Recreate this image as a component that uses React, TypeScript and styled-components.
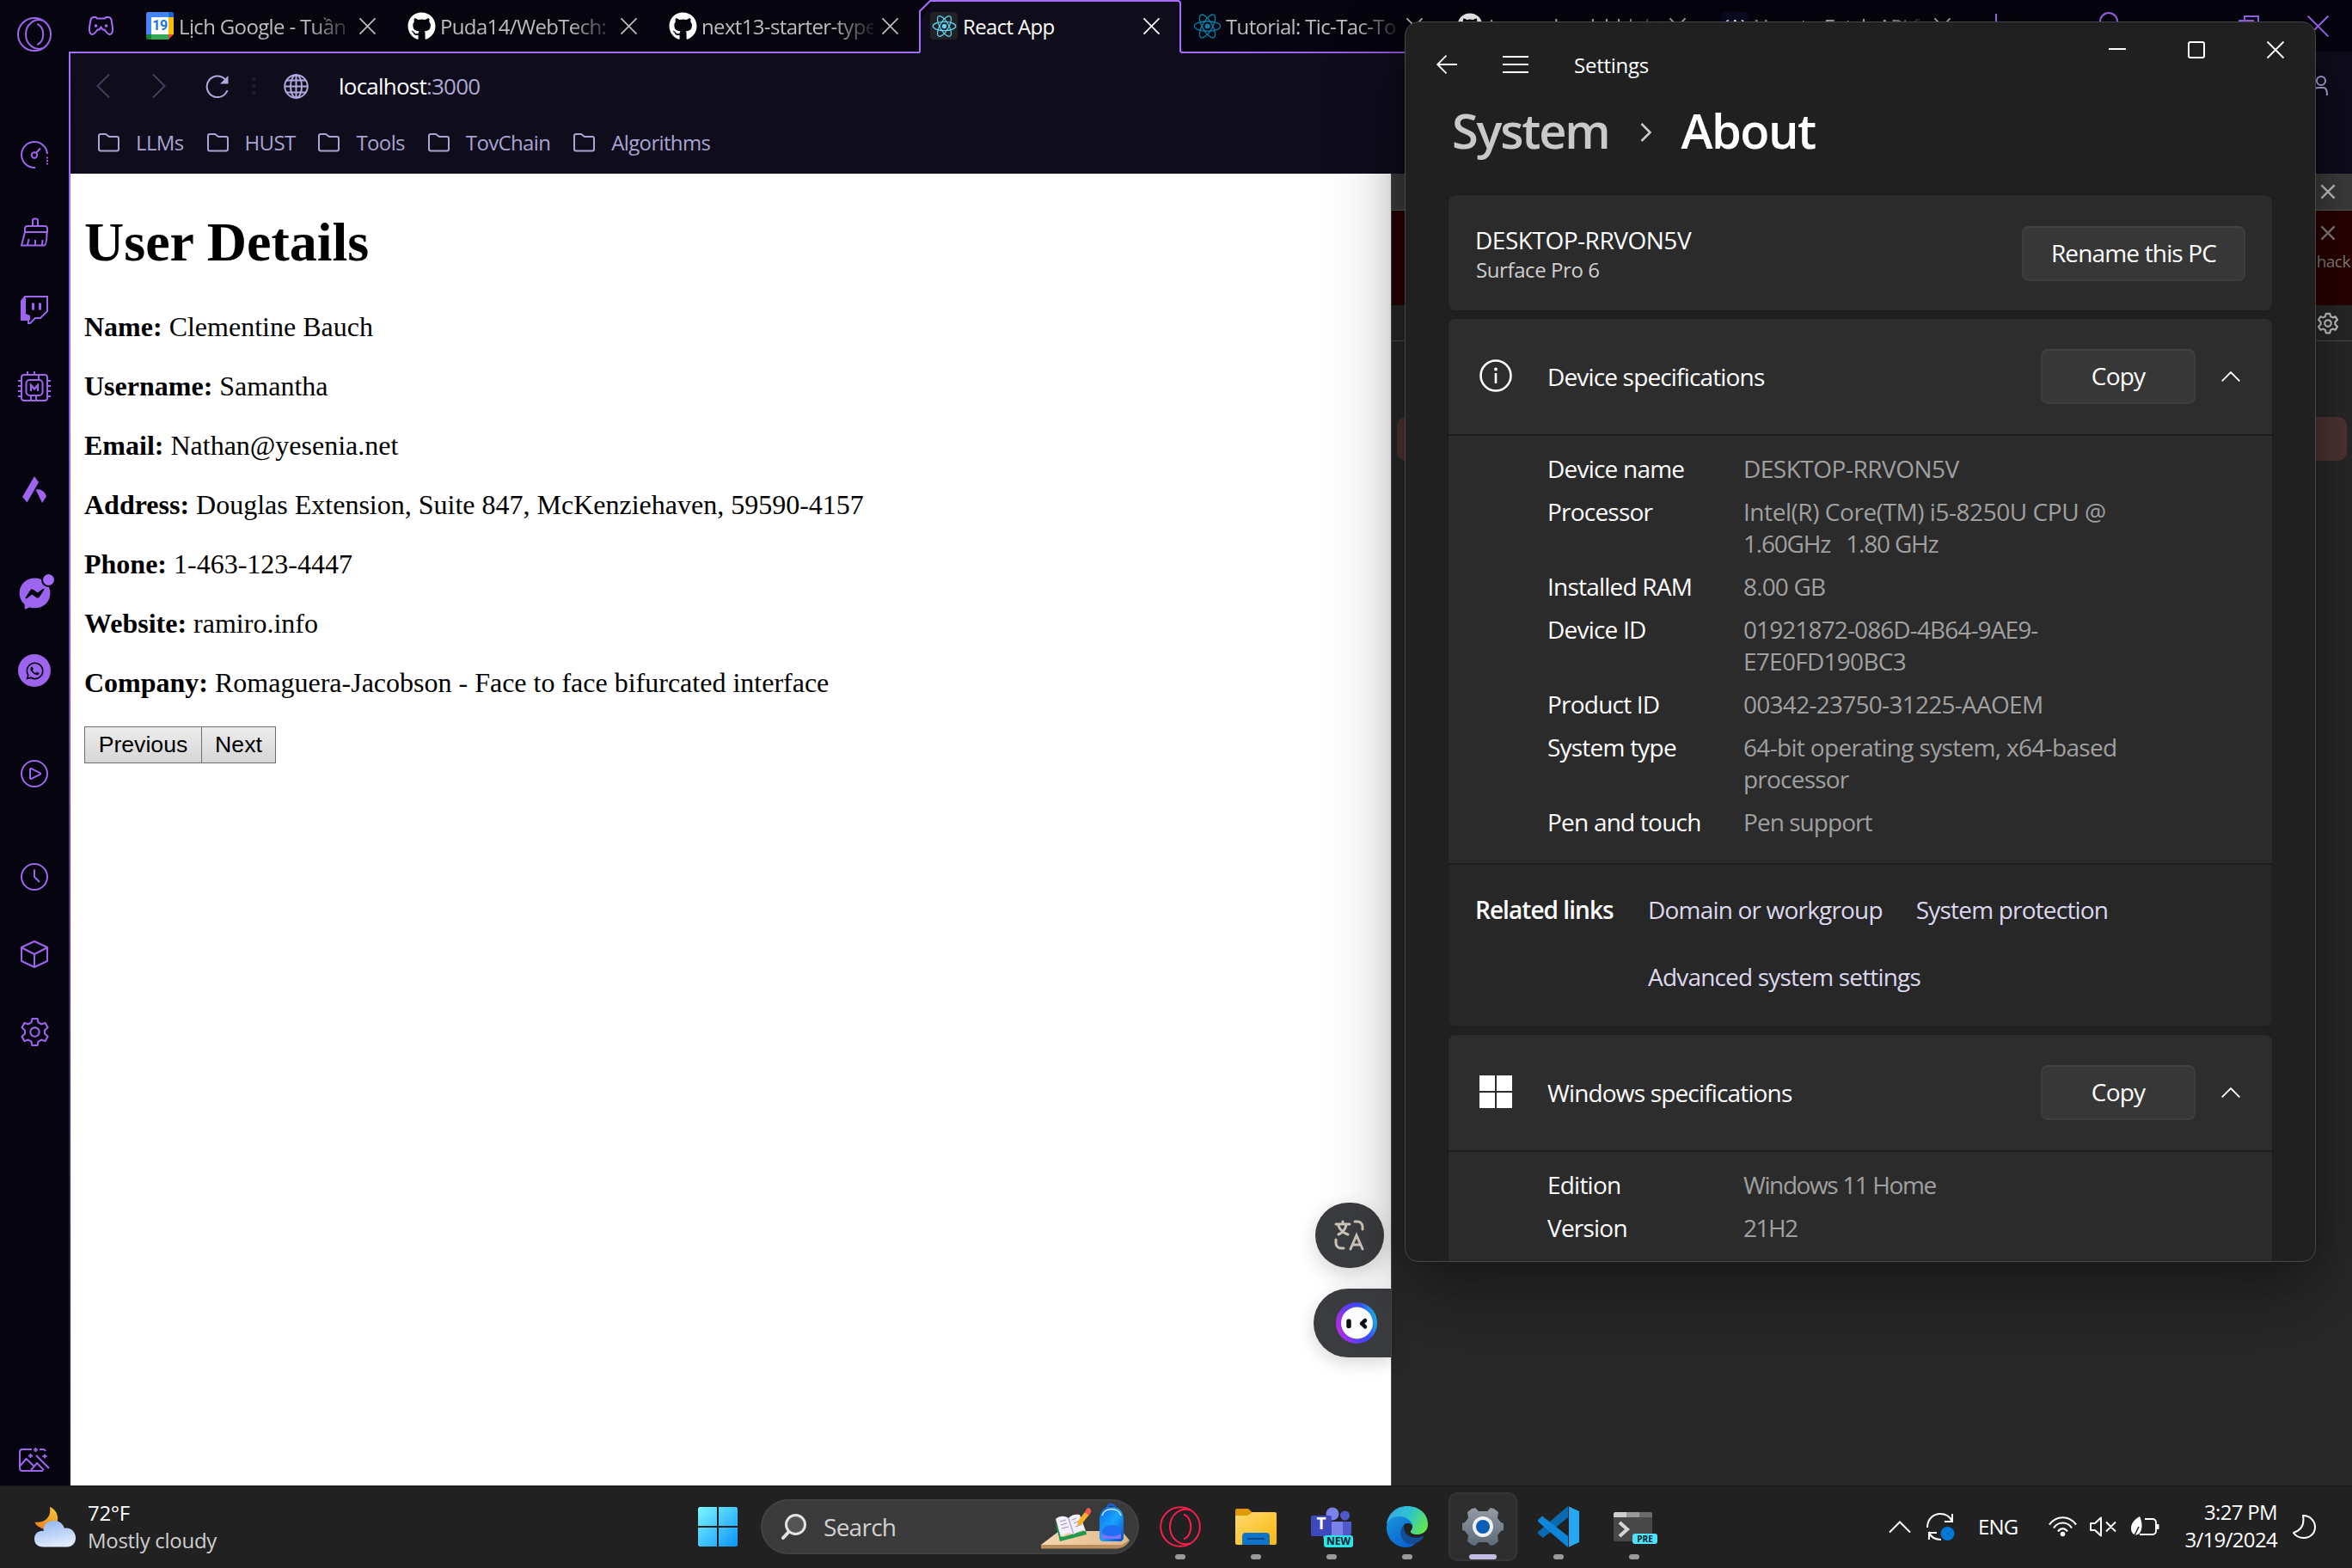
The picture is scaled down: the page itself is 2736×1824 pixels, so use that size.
import React from "react";
import styled, { createGlobalStyle } from "styled-components";
import { FaGithub, FaFacebookMessenger, FaWhatsapp } from "react-icons/fa";

const PURPLE = "#9d65ee";
const LILAC = "#b3a8de";
const UI = `"Open Sans", "Noto Sans", sans-serif`;

const GlobalStyle = createGlobalStyle`
  *, *::before, *::after { box-sizing: border-box; }
  body { margin: 0; background: #06040e; }
  svg { display: block; flex: none; overflow: visible; }
`;

const Desktop = styled.div`
  position: relative;
  display: flex;
  flex-direction: column;
  width: 2736px;
  height: 1824px;
  overflow: hidden;
  font-family: ${UI};
  font-size: 24px;
  letter-spacing: -0.02em;
`;

/* ---------- browser ---------- */

const Browser = styled.div`
  display: flex;
  height: 1728px;
  background: #06040e;
`;

const Sidebar = styled.div`
  display: flex;
  flex-direction: column;
  width: 80px;
`;

const SideGroup = styled.div<{ $top?: string }>`
  display: flex;
  flex-direction: column;
  margin-top: ${(p) => p.$top ?? "30px"};
`;

const SideSlot = styled.div<{ $h?: number }>`
  position: relative;
  display: flex;
  align-items: center;
  justify-content: center;
  height: ${(p) => p.$h ?? 90}px;
  color: ${PURPLE};
`;

const NoticeDot = styled.span`
  position: absolute;
  left: 50px;
  top: 23px;
  width: 13px;
  height: 13px;
  border-radius: 50%;
  background: #a66bff;
  box-shadow: 0 0 0 2px #06040e;
`;

const WhatsBadge = styled.div`
  display: flex;
  align-items: center;
  justify-content: center;
  width: 38px;
  height: 38px;
  border-radius: 50%;
  background: ${PURPLE};
  color: #06040e;
`;

const Main = styled.div`
  display: flex;
  flex-direction: column;
  flex: 1;
  min-width: 0;
`;

const TabStrip = styled.div`
  display: flex;
  height: 62px;
  padding: 0 0 2px 23px;
  align-items: center;
  background: linear-gradient(90deg, #a66bff 0%, #a66bff 50%, #0f0c1c 94%) 0 100% / 100% 2px no-repeat;
`;

const Tabs = styled.div`
  display: flex;
  height: 62px;
  margin: 0 0 -2px 26px;
`;

const Tab = styled.div<{ $active?: boolean; $gap?: number }>`
  position: relative;
  display: flex;
  align-items: center;
  width: 304px;
  height: 62px;
  margin-left: ${(p) => p.$gap ?? 0}px;
  padding: 0 25px 2px 12px;
  color: ${(p) => (p.$active ? "#fff" : "#bdbdbf")};
  background: ${(p) =>
    p.$active ? "linear-gradient(125deg, #06040e 14px, #0f0c1c 14px)" : "transparent"};
`;

const TabOutline = styled.svg`
  position: absolute;
  left: 0;
  top: 0;
`;

const TabIcon = styled.div<{ $bg?: string }>`
  position: relative;
  display: flex;
  align-items: center;
  justify-content: center;
  width: 32px;
  height: 32px;
  border-radius: 4px;
  background: ${(p) => p.$bg ?? "transparent"};
  font-size: 22px;
  line-height: 28px;
  color: #fff;
`;

const TabTitle = styled.div<{ $fade?: boolean }>`
  flex: 1;
  min-width: 0;
  margin: 2px 10px 0 6px;
  line-height: 34px;
  letter-spacing: -0.027em;
  white-space: nowrap;
  overflow: hidden;
  -webkit-mask-image: ${(p) =>
    p.$fade ? "linear-gradient(90deg, #000 76%, rgba(0,0,0,.12) 100%)" : "none"};
`;

const StripButton = styled.div<{ $ml: number }>`
  margin-left: ${(p) => p.$ml}px;
  color: #a66bff;
`;

const Frame = styled.div`
  flex: 1;
  display: flex;
  flex-direction: column;
  padding-left: 2px;
  background: linear-gradient(180deg, #a66bff 0%, #9a63ec 25%, #7048a5 50%, #3b2757 72%, #15101f 100%);
`;

const NavBar = styled.div`
  display: flex;
  align-items: center;
  height: 76px;
  padding: 0 27px 0 30px;
  background: #0f0c1c;
  color: ${LILAC};
`;

const NavItem = styled.div<{ $ml?: number; $dim?: boolean }>`
  margin-left: ${(p) => p.$ml ?? 0}px;
  color: ${(p) => (p.$dim ? "#423e5c" : LILAC)};
`;

const NavDots = styled.div`
  display: flex;
  flex-direction: column;
  gap: 4px;
  margin-left: 27px;
  span {
    width: 4px;
    height: 4px;
    background: #1d1a36;
  }
`;

const Address = styled.div`
  margin: 0 0 0 35px;
  font-size: 26px;
  letter-spacing: -0.03em;
  color: #b0a8d4;
  b {
    font-weight: 400;
    color: #fff;
  }
`;

const NavProfile = styled.div`
  margin-left: auto;
`;

const Bookmarks = styled.div`
  display: flex;
  gap: 27px;
  height: 64px;
  padding: 0 0 8px 32px;
  background: #0f0c1c;
  color: #aaa4d2;
  letter-spacing: -0.027em;
`;

const Bookmark = styled.div`
  display: flex;
  align-items: center;
  gap: 19px;
  line-height: 56px;
`;

const Panes = styled.div`
  display: flex;
  flex: 1;
`;

const Page = styled.div`
  position: relative;
  width: 1536px;
  padding: 42.88px 16px 0;
  background: #fff;
  color: #000;
  font-family: "Liberation Serif", "Times New Roman", serif;
  font-size: 32px;
  letter-spacing: 0;
  h1 {
    margin: 0 0 42.88px;
    font-size: 64px;
    line-height: 74px;
  }
  p {
    margin: 0 0 32px;
    line-height: 37px;
  }
`;

const Pager = styled.div`
  display: flex;
`;

const PageButton = styled.button<{ $w: number }>`
  width: ${(p) => p.$w}px;
  height: 43px;
  margin: 0 -1px 0 0;
  padding: 0;
  border: 1px solid #6f6f6f;
  border-radius: 0;
  background: linear-gradient(180deg, #ececec, #d6d6d6);
  font: 26.67px/39px "Liberation Sans", Arial, sans-serif;
  color: #000;
`;

const Bubbles = styled.div`
  position: absolute;
  right: 0;
  top: 1197px;
  display: flex;
  flex-direction: column;
  align-items: flex-end;
  gap: 24px;
`;

const TranslateBubble = styled.div`
  display: flex;
  align-items: center;
  justify-content: center;
  width: 80px;
  height: 76px;
  margin-right: 8px;
  border-radius: 40px;
  background: #3b3c3f;
  box-shadow: 0 8px 24px rgba(0, 0, 0, 0.16);
`;

const BotBubble = styled.div`
  display: flex;
  align-items: center;
  width: 90px;
  height: 80px;
  padding-left: 26px;
  border-radius: 40px 0 0 40px;
  background: #3b3c3f;
  box-shadow: 0 6px 20px rgba(0, 0, 0, 0.16);
`;

const DevTools = styled.div`
  display: flex;
  flex-direction: column;
  flex: 1;
  border-left: 1px solid #4a4c4e;
  background: #282828;
  color: #c7c7c7;
`;

const DevHeader = styled.div`
  display: flex;
  justify-content: flex-end;
  align-items: center;
  height: 43px;
  padding-right: 20px;
  background: #3c3c3c;
  border-bottom: 1px solid #5e5e5e;
`;

const DevError = styled.div`
  display: flex;
  flex-direction: column;
  align-items: flex-end;
  height: 110px;
  padding: 18px 2px 0 0;
  background: #290000;
  font-size: 19px;
  line-height: 26px;
  color: #85807c;
  svg {
    margin: 0 18px 12px 0;
  }
`;

const DevToolbar = styled.div`
  display: flex;
  justify-content: flex-end;
  align-items: center;
  height: 42px;
  padding-right: 16px;
  border-bottom: 1px solid #4f4f4f;
`;

const DevLog = styled.div`
  height: 51px;
  margin: 88px 6px 0;
  border-radius: 10px;
  background: #4e3534;
`;

/* ---------- settings window ---------- */

const Window = styled.div`
  position: absolute;
  left: 1634px;
  top: 25px;
  width: 1060px;
  height: 1443px;
  border: 1px solid #464646;
  border-radius: 16px;
  background: #202020;
  color: #fff;
  overflow: hidden;
`;

const WindowShadow = styled.div`
  position: absolute;
  left: 1634px;
  top: 25px;
  width: 1060px;
  height: 1443px;
  border-radius: 16px;
  box-shadow: 0 40px 90px rgba(0, 0, 0, 0.34), 0 0 40px rgba(0, 0, 0, 0.22);
`;

const TitleBar = styled.div`
  display: flex;
  align-items: center;
  height: 98px;
  padding-left: 36px;
`;

const TitleText = styled.div`
  margin-left: 53px;
  letter-spacing: -0.01em;
`;

const Controls = styled.div`
  display: flex;
  align-self: flex-start;
  margin-left: auto;
`;

const Control = styled.div`
  display: flex;
  align-items: center;
  justify-content: center;
  width: 92px;
  height: 64px;
`;

const Crumbs = styled.div`
  display: flex;
  align-items: center;
  height: 54px;
  padding-left: 54px;
  font-size: 56px;
  font-weight: 600;
  line-height: 54px;
  letter-spacing: -0.04em;
  span:first-child {
    color: #c9c9c9;
  }
  span:last-child {
    letter-spacing: -0.027em;
  }
  svg {
    margin: 6px 33px 0 37px;
  }
`;

const Cards = styled.div`
  display: flex;
  flex-direction: column;
  gap: 10px;
  margin: 49px 50px 0 50px;
  font-size: 28px;
  line-height: 37px;
`;

const Card = styled.div`
  border-radius: 8px;
  background: #2b2b2b;
  box-shadow: 0 0 0 1px #1d1d1d;
`;

const PcCard = styled(Card)`
  display: flex;
  align-items: center;
  justify-content: space-between;
  height: 134px;
  padding: 2px 31px 0 31px;
`;

const PcName = styled.div`
  letter-spacing: -0.017em;
`;

const PcModel = styled.div`
  padding-left: 1px;
  font-size: 24px;
  line-height: 32px;
  color: #d0d0d0;
  letter-spacing: -0.017em;
`;

const Button = styled.div<{ $w: number }>`
  display: flex;
  align-items: center;
  justify-content: center;
  width: ${(p) => p.$w}px;
  height: 64px;
  margin-bottom: 1px;
  border: 2px solid #3d3d3d;
  border-top-color: #424242;
  border-radius: 8px;
  background: #373737;
  letter-spacing: -0.03em;
`;

const CardHeader = styled.div`
  display: flex;
  align-items: center;
  height: 134px;
  padding: 0 37px 0 36px;
  border-radius: 8px 8px 0 0;
  background: #2d2d2d;
`;

const HeaderIcon = styled.div`
  margin-bottom: 2px;
`;

const CardTitle = styled.div`
  flex: 1;
  margin: 1px 0 0 41px;
  letter-spacing: -0.03em;
`;

const Chevron = styled.div`
  margin-left: 30px;
`;

const Specs = styled.div`
  display: grid;
  grid-template-columns: 228px 1fr;
  row-gap: 13px;
  padding: 20px 20px 29px 115px;
  border-top: 2px solid #1e1e1e;
`;

const SpecLabel = styled.div`
  letter-spacing: -0.028em;
`;

const SpecLine = styled.div<{ $track?: number }>`
  white-space: pre;
  color: #a0a0a0;
  letter-spacing: ${(p) => p.$track ?? -0.02}em;
`;

const Related = styled.div`
  display: flex;
  height: 190px;
  padding: 33px 100px 0 31px;
  border-top: 2px solid #1e1e1e;
  border-radius: 0 0 8px 8px;
  background: #272727;
  line-height: 38px;
  font-weight: 600;
  b {
    width: 201px;
    font-weight: 600;
    letter-spacing: -0.034em;
  }
`;

const Links = styled.div`
  flex: 1;
  display: flex;
  flex-wrap: wrap;
  align-content: flex-start;
  gap: 40px 39px;
  font-weight: 400;
  color: #ddd8ee;
  letter-spacing: -0.029em;
`;

/* ---------- taskbar ---------- */

const Taskbar = styled.div`
  position: relative;
  display: flex;
  align-items: center;
  height: 96px;
  background: #212121;
  box-shadow: inset 0 1px 0 #1b1b1b;
  color: #fff;
`;

const Weather = styled.div`
  display: flex;
  align-items: center;
  gap: 14px;
  width: 812px;
  padding-left: 40px;
  line-height: 32px;
  letter-spacing: -0.012em;
  div div:last-child {
    color: #cfcfcf;
  }
`;

const SearchBox = styled.div`
  display: flex;
  align-items: center;
  width: 440px;
  height: 64px;
  margin: 0 4px 0 27px;
  padding: 0 8px 0 22px;
  border: 2px solid #424242;
  border-radius: 32px;
  background: #3a3a3a;
  font-size: 28px;
  color: #d2d2d2;
  span {
    flex: 1;
    margin-left: 20px;
    letter-spacing: -0.026em;
  }
`;

const TaskButton = styled.div<{ $active?: boolean }>`
  position: relative;
  display: flex;
  align-items: center;
  justify-content: center;
  width: 80px;
  height: 80px;
  margin: 0 4px;
  border: 2px solid ${(p) => (p.$active ? "#353535" : "transparent")};
  border-radius: 10px;
  background: ${(p) => (p.$active ? "#2e2e2e" : "transparent")};
  &::after {
    content: "";
    position: absolute;
    bottom: 0;
    left: calc(50% - ${(p) => (p.$active ? 16 : 6)}px);
    width: ${(p) => (p.$active ? 32 : 12)}px;
    height: 6px;
    border-radius: 3px;
    background: ${(p) => (p.$active ? "#c5bde4" : "#9a9a9a")};
  }
`;

const OperaRed = styled.div`
  color: #fa1e4e;
`;

const Tag = styled.span<{ $bg: string; $small?: boolean }>`
  position: absolute;
  right: ${(p) => (p.$small ? 11 : 13)}px;
  bottom: ${(p) => (p.$small ? 18 : 14)}px;
  width: ${(p) => (p.$small ? 29 : 34)}px;
  height: ${(p) => (p.$small ? 12 : 14)}px;
  border-radius: 3px;
  background: ${(p) => p.$bg};
  color: #06222b;
  font-size: ${(p) => (p.$small ? 10 : 12)}px;
  font-weight: 700;
  line-height: ${(p) => (p.$small ? 12 : 14)}px;
  text-align: center;
  letter-spacing: 0;
`;

const Tray = styled.div`
  display: flex;
  align-items: center;
  margin-left: auto;
  padding-right: 42px;
`;

const TrayItem = styled.div<{ $ml?: number }>`
  margin-left: ${(p) => p.$ml ?? 0}px;
`;

const Lang = styled.div`
  width: 46px;
  margin-left: 27px;
  line-height: 32px;
  letter-spacing: -0.036em;
`;

const Clock = styled.div`
  width: 110px;
  margin: 0 18px 3px 27px;
  line-height: 32px;
  text-align: right;
  white-space: nowrap;
  letter-spacing: -0.028em;
`;

/* ---------- drawings ---------- */

const Opera = ({ size, w = 2 }: { size: number; w?: number }) => (
  <svg width={size} height={size} viewBox="0 0 48 48" fill="none" stroke="currentColor" strokeWidth={w}>
    <circle cx="24" cy="24" r="22.8" />
    <path d="M35 4.5C24 1 12 10 12 24s12 23 23 19.500" />
    <path d="M28 9.500c11 5 11 24 0 29" strokeWidth={w} />
  </svg>
);

const Cross = ({ size, w = 2 }: { size: number; w?: number }) => (
  <svg width={size} height={size} viewBox="0 0 20 20" fill="none" stroke="currentColor" strokeWidth={w}>
    <path d="M.5.5l19 19M19.500.5l-19 19" />
  </svg>
);

const ReactLogo = ({ color, size }: { color: string; size: number }) => (
  <svg width={size} height={size} viewBox="-12 -12 24 24" fill="none" stroke={color} strokeWidth="1">
    <circle r="2.200" fill={color} stroke="none" />
    <ellipse rx="11" ry="4.200" />
    <ellipse rx="11" ry="4.200" transform="rotate(60)" />
    <ellipse rx="11" ry="4.200" transform="rotate(120)" />
  </svg>
);

const CalendarDay = styled.span`
  position: absolute;
  left: 0;
  top: 0;
  width: 32px;
  font: 700 16px/32px Roboto, sans-serif;
  letter-spacing: -0.5px;
  text-align: center;
  color: #1a73e8;
`;

const CalendarLogo = () => (
  <>
    <svg width="32" height="32" viewBox="0 0 32 32">
      <path d="M2 0h24v6H6v20H0V2a2 2 0 0 1 2-2z" fill="#4285f4" />
      <path d="M26 0h4a2 2 0 0 1 2 2v4h-6z" fill="#1967d2" />
      <path d="M26 6h6v20h-6z" fill="#fbbc04" />
      <path d="M6 26h20v6H6z" fill="#34a853" />
      <path d="M0 26h6v6H2a2 2 0 0 1-2-2z" fill="#188038" />
      <path d="M26 26h6l-6 6z" fill="#ea4335" />
      <path d="M6 6h20v20H6z" fill="#fff" />
    </svg>
    <CalendarDay>19</CalendarDay>
  </>
);

const FolderOutline = () => (
  <svg width="25" height="22" viewBox="0 0 25 22" fill="none" stroke="currentColor" strokeWidth="2">
    <path d="M1 3a2 2 0 0 1 2-2h6l4 3h9a2 2 0 0 1 2 2v12.500a2 2 0 0 1-2 2H3a2 2 0 0 1-2-2z" />
  </svg>
);

const GlobeIcon = () => (
  <svg width="29" height="29" viewBox="0 0 29 29" fill="none" stroke="currentColor" strokeWidth="2">
    <circle cx="14.500" cy="14.500" r="13.300" />
    <ellipse cx="14.500" cy="14.500" rx="6.500" ry="13.300" />
    <path d="M14.500 1v27M1 14.500h27M3 7.500h23M3 21.500h23" />
  </svg>
);

const GearIcon = ({ size, w, color }: { size: number; w: number; color?: string }) => (
  <svg width={size} height={size} viewBox="0 0 32 32" fill="none" stroke={color ?? "currentColor"} strokeWidth={w} strokeLinejoin="round">
    <path d="M13 1h6l1 4.300 3.300 1.900 4.300-1.500 3 5.200-3.400 3.100v4l3.400 3.100-3 5.200-4.300-1.500-3.300 1.900L19 31h-6l-1-4.300-3.300-1.900-4.300 1.500-3-5.200L4.800 18v-4L1.400 10.900l3-5.200 4.300 1.500L12 5.300z" />
    <circle cx="16" cy="16" r="5" />
  </svg>
);

const Caret = () => (
  <svg width="22" height="12" viewBox="0 0 22 12" fill="none" stroke="#fff" strokeWidth="1.800">
    <path d="M.7 11.300L11 1l10.300 10.300" />
  </svg>
);

const side = { fill: "none", stroke: "currentColor", strokeWidth: 2 } as const;

const SpeedDialIcon = () => (
  <svg width="32" height="32" viewBox="0 0 32 32" {...side}>
    <path d="M17 31A15 15 0 1 1 31 15" />
    <circle cx="16" cy="16.500" r="3.200" />
    <path d="M18 14l5-5.500" />
    <path d="M31 18.500v2M31 22v2M31 25.500v2" />
  </svg>
);

const BroomIcon = () => (
  <svg width="32" height="34" viewBox="0 0 32 34" {...side}>
    <path d="M14 10V3.500a2 2 0 0 1 2-2h2a2 2 0 0 1 2 2V10M5 17v-4.500A2.500 2.500 0 0 1 7.500 10h21a2.500 2.500 0 0 1 2.500 2.500V17zM5 17L1 32.500h26c2.500 0 3.500-7 3.500-15.500M8 32l1.500-7M17 32v-6M25 32l.5-6" />
  </svg>
);

const TwitchIcon = () => (
  <svg width="32" height="33" viewBox="0 0 32 33" {...side}>
    <path d="M5 1h26v17l-8 8h-6l-6 6H9v-4H1V6z" />
    <path d="M1 6l5-5v20l5 2v5H1z" fill="currentColor" stroke="none" />
    <path d="M14.500 8.500v8M22.500 8.500v8" strokeWidth="3" />
  </svg>
);

const ChipIcon = () => (
  <svg width="38" height="36" viewBox="0 0 38 36" {...side}>
    <rect x="4" y="4" width="30" height="30" rx="3" />
    <rect x="9.500" y="10" width="19" height="18" rx="4" />
    <path d="M4 11H0M4 17H0M4 23H0M4 29H0M38 11h-4M38 17h-4M38 23h-4M38 29h-4M11 4V0M19 4V0M15 34v-6M21 34v-6M24 10V5" />
    <path d="M15 23v-7l4 4.500 4-4.500v7" strokeWidth="2.200" />
  </svg>
);

const AriaIcon = () => (
  <svg width="28" height="32" viewBox="0 0 28 32" fill="currentColor">
    <path d="M14 0l5 7L5.500 30.500 0 24z" />
    <path d="M15.500 15.500c6-1 10.500 2 12.500 8l-5 7.500z" />
  </svg>
);

const PlayIcon = () => (
  <svg width="32" height="32" viewBox="0 0 32 32" {...side}>
    <circle cx="16" cy="16" r="15" />
    <path d="M11 11v10c0 1 .5 1.300 1.500.9l10-5c1-.5 1-1.300 0-1.800l-10-5c-1-.4-1.500 0-1.500.9z" />
  </svg>
);

const ClockIcon = () => (
  <svg width="32" height="32" viewBox="0 0 32 32" {...side}>
    <circle cx="16" cy="16" r="15" />
    <path d="M16 7.500V16l6 6" />
  </svg>
);

const CubeIcon = () => (
  <svg width="32" height="32" viewBox="0 0 32 32" {...side} strokeLinejoin="round">
    <path d="M16 1l15 7v16l-15 7-15-7V8zM1.500 8.500L16 16l14.500-7.500M16 16v15" />
  </svg>
);

const WandIcon = () => (
  <svg width="36" height="28" viewBox="0 0 36 28" {...side}>
    <path d="M15 2H4a3 3 0 0 0-3 3v19a3 3 0 0 0 3 3h24M24 2h4a3 3 0 0 1 3 2M1.500 21l7-8L17 21M14 26l7-8 8 8M20 9l15 15" />
    <path d="M19.500 0v5M17 2.500h5M13.500 7v5M11 9.500h5M30 7.500v5M27.500 10h5" strokeWidth="1.800" />
  </svg>
);

const GamepadIcon = () => (
  <svg width="29" height="22" viewBox="0 0 29 22" fill="none" stroke="#a66bff" strokeWidth="2">
    <path d="M6 1h2.500l1.500 1.500h9L20.500 1H23c2 0 3 1 3.500 3L28 13c.5 4-.5 8-3.500 8-1.500 0-2.500-1-4-3l-2-2.500h-2l-2-3-2 3h-2l-2 2.500c-1.500 2-2.500 3-4 3-3 0-4-4-3.500-8L2.500 4C3 2 4 1 6 1z" />
    <circle cx="8.500" cy="11" r="1.800" fill="#a66bff" stroke="none" />
    <circle cx="20.500" cy="11" r="1.800" fill="#a66bff" stroke="none" />
  </svg>
);

const TranslateIcon = () => (
  <svg width="36" height="36" viewBox="0 0 36 36" fill="none" stroke="#cfc6ba" strokeWidth="3" strokeLinecap="round">
    <path d="M2 5h16M10 2v3M5 17c5-2 8-6 9-11M5 7c2 5 5 8 11 10" />
    <path d="M24 2h3a6 6 0 0 1 6 6v3M2 23v4a6 6 0 0 0 6 6h3M19 34l7-16 7 16M21.500 29h9" />
  </svg>
);

const BotFace = () => (
  <svg width="48" height="48" viewBox="0 0 48 48">
    <defs>
      <linearGradient id="bot" x1="0" y1="0.700" x2="1" y2="0.400">
        <stop offset="0" stopColor="#c02be0" />
        <stop offset="0.350" stopColor="#6a3cf2" />
        <stop offset="0.700" stopColor="#3a4bff" />
        <stop offset="1" stopColor="#17b6e8" />
      </linearGradient>
    </defs>
    <circle cx="24" cy="24" r="24" fill="url(#bot)" />
    <circle cx="24.500" cy="24" r="18.500" fill="#fff" />
    <path d="M15 22v5.500" stroke="#111" strokeWidth="5.500" strokeLinecap="round" />
    <path d="M34 21l-4 3.700 4 3.700" stroke="#111" strokeWidth="4.500" strokeLinecap="round" strokeLinejoin="round" fill="none" />
  </svg>
);

const WeatherIcon = () => (
  <svg width="48" height="47" viewBox="0 0 48 47">
    <defs>
      <linearGradient id="moon" x1="0.600" y1="0" x2="0.200" y2="1">
        <stop offset="0" stopColor="#f5c23c" />
        <stop offset="1" stopColor="#f08021" />
      </linearGradient>
      <linearGradient id="cloud" x1="0" y1="0" x2="0.300" y2="1">
        <stop offset="0" stopColor="#8db2f2" />
        <stop offset="1" stopColor="#dfeafc" />
      </linearGradient>
    </defs>
    <path d="M18 0c8 3 11 12 8 19s-12 9-19 5C3 22 1 20 .5 17.500 12 19 20 12 18 0z" fill="url(#moon)" />
    <path d="M11 28c-2-6 4-12 12-12 7 0 11 5 12 9 7-2 13 4 13 11 0 6-4 10.500-10 10.500H10C4 46.500 0 43 0 37s5-10 11-9z" fill="url(#cloud)" />
  </svg>
);

const StartLogo = () => (
  <svg width="46" height="46" viewBox="0 0 46 46">
    <defs>
      <linearGradient id="win" x1="0" y1="0" x2="1" y2="1">
        <stop offset="0" stopColor="#7df6ff" />
        <stop offset="1" stopColor="#0a94ff" />
      </linearGradient>
    </defs>
    <path d="M1.500 0H22v22H0V1.500zM24 0h20.500L46 1.500V22H24zM0 24h22v22H1.500L0 44.500zM24 24h22v20.500L44.500 46H24z" fill="url(#win)" />
  </svg>
);

const Magnifier = () => (
  <svg width="29" height="30" viewBox="0 0 29 30" fill="none" stroke="#e2e4e6" strokeLinecap="round">
    <circle cx="16.500" cy="12.500" r="11" strokeWidth="3" fill="#555" />
    <path d="M8.500 21L2 28" strokeWidth="4" />
  </svg>
);

const SchoolArt = () => (
  <svg width="104" height="52" viewBox="0 2 104 52">
    <defs>
      <linearGradient id="bag" x1="0" y1="0" x2="1" y2="1">
        <stop offset="0" stopColor="#0a6cf0" />
        <stop offset="0.500" stopColor="#1ba4ff" />
        <stop offset="1" stopColor="#0549c4" />
      </linearGradient>
      <linearGradient id="desk" x1="0" y1="0" x2="1" y2="0">
        <stop offset="0" stopColor="#f7d6ae" />
        <stop offset="1" stopColor="#dfb888" />
      </linearGradient>
    </defs>
    <path d="M21 33h73l9 11-8 5H0z" fill="url(#desk)" />
    <path d="M0 49h95l8-5c-3 6-9 9.500-15 9.500H0z" fill="#b98d5c" />
    <path d="M16 21l6 24 31-8-1-5-27 8z" fill="#1f9a4b" />
    <path d="M17 19c5-4 10-4 15-1 3-4 8-5 13-4l7 19c-6-1-10 0-14 4-5-3-10-2-15 3z" fill="#f3effc" />
    <path d="M32 18l6 19" stroke="#b7a8dd" strokeWidth="1.500" />
    <path d="M22 22l7-2M23 26l7-2M24 30l8-2M36 20l5-2M38 24l8-3M40 28l8-3" stroke="#9a92b8" strokeWidth="1" />
    <path d="M42 28l1-7 8-10 5 3-8 10z" fill="#fbb02d" />
    <path d="M51 11l2-4c2-2 6 0 5 4l-2 4z" fill="#f4574d" />
    <path d="M77 6c0-5 9-5 9 0" stroke="#1365d8" strokeWidth="2.500" fill="none" />
    <path d="M68 20C68 9 74 5 82 5s14 4 14 15v20c0 4-2 5-5 5H73c-3 0-5-1-5-5z" fill="url(#bag)" />
    <path d="M71 15c3-10 19-10 22 0" stroke="#cfe7ff" strokeWidth="1.500" fill="none" />
    <path d="M71 35c0-12 22-12 22 0v5c0 2-1 2-3 2H74c-2 0-3 0-3-2z" fill="#1f6ff2" />
    <path d="M71 36c6 4 16 4 22 0v4c0 2-1 2-3 2H74c-2 0-3 0-3-2z" fill="#7f74f5" />
  </svg>
);

const ExplorerIcon = () => (
  <svg width="48" height="42" viewBox="0 0 48 42">
    <defs>
      <linearGradient id="fold" x1="0" y1="0" x2="1" y2="1">
        <stop offset="0" stopColor="#ffd970" />
        <stop offset="1" stopColor="#fbb80c" />
      </linearGradient>
    </defs>
    <path d="M0 2a2 2 0 0 1 2-2h13l5 4.500-4 4H0z" fill="#e09a00" />
    <path d="M0 8h14l6-4h26a2 2 0 0 1 2 2v34a2 2 0 0 1-2 2H2a2 2 0 0 1-2-2z" fill="url(#fold)" />
    <path d="M8 42V32a4 4 0 0 1 4-4h24a4 4 0 0 1 4 4v10z" fill="#0e74c9" />
    <path d="M15 35h18" stroke="#05468a" strokeWidth="2" strokeLinecap="round" />
  </svg>
);

const TeamsT = styled.span`
  position: absolute;
  left: 14px;
  top: 21px;
  width: 24px;
  font-size: 19px;
  font-weight: 700;
  line-height: 26px;
  letter-spacing: 0;
  text-align: center;
`;

const TeamsIcon = () => (
  <svg width="48" height="46" viewBox="0 0 48 46">
    <circle cx="25" cy="8" r="7.500" fill="#7b83eb" />
    <circle cx="39.500" cy="10" r="5.500" fill="#5059c9" />
    <path d="M32 17h15v12a9 9 0 0 1-15 6z" fill="#5059c9" />
    <path d="M14 17h23v16a11.500 11.500 0 0 1-23 0z" fill="#7b83eb" />
    <rect x="0" y="10" width="24" height="24" rx="2" fill="#4048be" />
  </svg>
);

const EdgeIcon = () => (
  <svg width="48" height="48" viewBox="0 0 48 48">
    <defs>
      <linearGradient id="e1" x1="0" y1="0.200" x2="1" y2="0.600">
        <stop offset="0" stopColor="#35a7e8" />
        <stop offset="0.500" stopColor="#2ec3cf" />
        <stop offset="1" stopColor="#62e552" />
      </linearGradient>
      <linearGradient id="e2" x1="0" y1="0" x2="0.700" y2="1">
        <stop offset="0" stopColor="#1795dd" />
        <stop offset="1" stopColor="#0a62cf" />
      </linearGradient>
    </defs>
    <path d="M0 22C1 9 11 0 24 0c14 0 24 9 24 21 0 8-6 12-12 12-6 0-9-2-8-4 1-1 2-3 2-5 0-6-7-11-15-11C8 13 3 16 0 22z" fill="url(#e1)" />
    <path d="M0 24c1-8 7-12 14-12 8 0 14 4 16 10-4-3-8-2-9-1-5 5-3 17 8 21 3 1 5 1 5 1-3 3-7 5-11 5C9 48-1 36 0 24z" fill="url(#e2)" />
    <path d="M18 24c-6 12 6 25 16 19 4-1 7-4 9-7 1-1 0-2-1-1-12 5-22-1-22-11 0-1 1-3 2-3z" fill="#134d96" />
  </svg>
);

const SettingsGear = () => (
  <svg width="48" height="54" viewBox="0 0 48 54">
    <defs>
      <linearGradient id="g1" x1="0" y1="0" x2="0" y2="1">
        <stop offset="0" stopColor="#939ca5" />
        <stop offset="1" stopColor="#5d6b78" />
      </linearGradient>
    </defs>
    <path d="M11 6l4-1 4 4h10l4-4 4 1 5 4-1 7 4 5 3 1v8l-3 1-4 5 1 7-5 4-4 1-4-4H19l-4 4-4-1-5-4 1-7-4-5-3-1v-8l3-1 4-5-1-7z" fill="url(#g1)" />
    <circle cx="24" cy="27" r="12" fill="#f1f2f3" />
    <circle cx="24" cy="27" r="8" fill="#0d5fb4" />
  </svg>
);

const CodeIcon = () => (
  <svg width="48" height="48" viewBox="0 0 48 48">
    <path d="M35 0v13L6 37l-6-5v-2z" fill="#0b69b0" />
    <path d="M5 11.500L0 16v2l35 30V35z" fill="#0d86d8" />
    <path d="M35 0l13 6v36l-13 6c1 0 1-1 1-2V2c0-1 0-1-1-2z" fill="#27a8f4" />
  </svg>
);

const TerminalIcon = () => (
  <svg width="48" height="34" viewBox="0 0 48 34">
    <rect width="45" height="34" rx="2" fill="#484848" />
    <path d="M0 2a2 2 0 0 1 2-2h13v6H0z" fill="#cfcfcf" />
    <path d="M15 0h15v6H15z" fill="#9a9a9a" />
    <path d="M30 0h13a2 2 0 0 1 2 2v4H30z" fill="#6c6c6c" />
    <path d="M7 12l9 8-9 8" stroke="#d6d6d6" strokeWidth="4" fill="none" />
  </svg>
);

const SyncIcon = () => (
  <svg width="33" height="32" viewBox="0 0 33 32" fill="none" stroke="#fff" strokeWidth="2">
    <path d="M1 17C1 7 8 1 16 1c6 0 11 3 13.500 8M30 1v9h-9M17 31C10 31 5 28 2.500 22M3 31v-8h9" />
    <circle cx="24.500" cy="24" r="8" fill="#0078d7" stroke="none" />
  </svg>
);

const WifiIcon = () => (
  <svg width="33" height="24" viewBox="0 0 33 24" fill="none" stroke="#fff" strokeWidth="2.200">
    <path d="M1 9.500C9-1.500 24-1.500 32 9.500M6 13.500c5-8 16-8 21 0M11 17.500c3-4.500 8-4.500 11 0" />
    <circle cx="16.500" cy="20.500" r="2.800" fill="#fff" stroke="none" />
  </svg>
);

const MutedIcon = () => (
  <svg width="31" height="24" viewBox="0 0 31 24" fill="none" stroke="#fff" strokeWidth="2" strokeLinejoin="round">
    <path d="M1 8h5l7-6.500v21L6 16H1zM19 6.500l11 11M30 6.500l-11 11" />
  </svg>
);

const BatteryIcon = () => (
  <svg width="33" height="24" viewBox="0 0 33 24" fill="none" stroke="#fff" strokeWidth="2">
    <path d="M16 3h9a4 4 0 0 1 4 4v10a4 4 0 0 1-4 4H10" />
    <path d="M30 9h1.500a1 1 0 0 1 1 1v4a1 1 0 0 1-1 1H30z" fill="#fff" stroke="none" />
    <path d="M10 0C2 5 0 9 0 14c0 5 3 7.500 6 7.500C12 21 15 11 10 0z" fill="#fff" stroke="none" />
    <path d="M3 24l6-12" stroke="#212121" strokeWidth="1.500" />
  </svg>
);

const MoonIcon = () => (
  <svg width="27" height="28" viewBox="0 0 27 28" fill="none" stroke="#fff" strokeWidth="2" strokeLinejoin="round">
    <path d="M12 1c8 0 14 6 14 13.500S20 27 13 27C8 27 3.500 25 1 21c9-3 13-9 11-20z" />
  </svg>
);

/* ---------- data ---------- */

type Line = { text: string; track?: number };
type Spec = { label: string; lines: Line[] };

const details: [string, string][] = [
  ["Name", "Clementine Bauch"],
  ["Username", "Samantha"],
  ["Email", "Nathan@yesenia.net"],
  ["Address", "Douglas Extension, Suite 847, McKenziehaven, 59590-4157"],
  ["Phone", "1-463-123-4447"],
  ["Website", "ramiro.info"],
  ["Company", "Romaguera-Jacobson - Face to face bifurcated interface"],
];

const deviceSpecs: Spec[] = [
  { label: "Device name", lines: [{ text: "DESKTOP-RRVON5V", track: -0.018 }] },
  {
    label: "Processor",
    lines: [
      { text: "Intel(R) Core(TM) i5-8250U CPU @", track: -0.016 },
      { text: "1.60GHz   1.80 GHz", track: -0.043 },
    ],
  },
  { label: "Installed RAM", lines: [{ text: "8.00 GB", track: -0.03 }] },
  {
    label: "Device ID",
    lines: [
      { text: "01921872-086D-4B64-9AE9-", track: -0.032 },
      { text: "E7E0FD190BC3", track: -0.026 },
    ],
  },
  { label: "Product ID", lines: [{ text: "00342-23750-31225-AAOEM", track: -0.026 }] },
  {
    label: "System type",
    lines: [
      { text: "64-bit operating system, x64-based", track: -0.024 },
      { text: "processor", track: -0.028 },
    ],
  },
  { label: "Pen and touch", lines: [{ text: "Pen support", track: -0.034 }] },
];

const windowsSpecs: Spec[] = [
  { label: "Edition", lines: [{ text: "Windows 11 Home", track: -0.05 }] },
  { label: "Version", lines: [{ text: "21H2", track: -0.055 }] },
];

const SpecList = ({ rows }: { rows: Spec[] }) => (
  <Specs>
    {rows.map((row) => (
      <React.Fragment key={row.label}>
        <SpecLabel>{row.label}</SpecLabel>
        <div>
          {row.lines.map((line) => (
            <SpecLine key={line.text} $track={line.track}>{line.text}</SpecLine>
          ))}
        </div>
      </React.Fragment>
    ))}
  </Specs>
);

const BrowserTab = ({
  icon,
  title,
  active,
  bg,
  gap,
}: {
  icon: React.ReactNode;
  title: string;
  active?: boolean;
  bg?: string;
  gap?: number;
}) => (
  <Tab $active={active} $gap={gap}>
    {active && (
      <TabOutline width="304" height="62" fill="none" stroke="#a66bff" strokeWidth="2">
        <path d="M-1 61L0 60V13L12 1H301l2 2v57l2 1" />
      </TabOutline>
    )}
    <TabIcon $bg={bg}>{icon}</TabIcon>
    <TabTitle $fade={!active}>{title}</TabTitle>
    <Cross size={19} w={1.8} />
  </Tab>
);

export default function App() {
  return (
    <Desktop>
      <GlobalStyle />
      <Browser>
        <Sidebar>
          <SideSlot $h={80}><Opera size={40} w={2.4} /></SideSlot>
          <SideGroup $top="55px">
            <SideSlot><SpeedDialIcon /></SideSlot>
            <SideSlot><BroomIcon /></SideSlot>
            <SideSlot><TwitchIcon /></SideSlot>
            <SideSlot><ChipIcon /></SideSlot>
          </SideGroup>
          <SideGroup><SideSlot><AriaIcon /></SideSlot></SideGroup>
          <SideGroup>
            <SideSlot><FaFacebookMessenger size={37} /><NoticeDot /></SideSlot>
            <SideSlot><WhatsBadge><FaWhatsapp size={23} /></WhatsBadge></SideSlot>
          </SideGroup>
          <SideGroup><SideSlot><PlayIcon /></SideSlot></SideGroup>
          <SideGroup>
            <SideSlot><ClockIcon /></SideSlot>
            <SideSlot><CubeIcon /></SideSlot>
            <SideSlot><GearIcon size={33} w={2} /></SideSlot>
          </SideGroup>
          <SideGroup $top="auto"><SideSlot $h={60}><WandIcon /></SideSlot></SideGroup>
        </Sidebar>
        <Main>
          <TabStrip>
            <GamepadIcon />
            <Tabs>
              <BrowserTab icon={<CalendarLogo />} title="Lịch Google - Tuần" />
              <BrowserTab icon={<FaGithub size={33} />} title="Puda14/WebTech:" />
              <BrowserTab icon={<FaGithub size={33} />} title="next13-starter-type" />
              <BrowserTab icon={<ReactLogo color="#5fd7f5" size={29} />} title="React App" bg="#212226" active />
              <BrowserTab icon={<ReactLogo color="#087ea4" size={33} />} title="Tutorial: Tic-Tac-To" gap={2} />
              <BrowserTab icon={<FaGithub size={30} />} title="jusmash-adshblobt" gap={2} />
              <BrowserTab icon="(A)" title="How to Fetch API f" bg="#0a0a23" gap={4} />
            </Tabs>
            <StripButton $ml={14}>
              <svg width="28" height="28" viewBox="0 0 28 28" stroke="currentColor" strokeWidth="2"><path d="M14 0v28M0 14h28" /></svg>
            </StripButton>
            <StripButton $ml={104}>
              <svg width="28" height="32" viewBox="0 0 28 32" fill="none" stroke="currentColor" strokeWidth="2"><circle cx="13" cy="11" r="10" /><path d="M20 18l7 10" /></svg>
            </StripButton>
            <StripButton $ml={136}>
              <svg width="24" height="24" viewBox="0 0 24 24" fill="none" stroke="currentColor" strokeWidth="2"><path d="M1 6h16v17H1zM7 6V1h16v15h-6" /></svg>
            </StripButton>
            <StripButton $ml={56}><Cross size={25} w={1.6} /></StripButton>
          </TabStrip>
          <Frame>
            <NavBar>
              <NavItem $dim><svg width="16" height="28" viewBox="0 0 16 28" fill="none" stroke="currentColor" strokeWidth="2"><path d="M15 .5L1.500 14 15 27.500" /></svg></NavItem>
              <NavItem $dim $ml={49}><svg width="16" height="28" viewBox="0 0 16 28" fill="none" stroke="currentColor" strokeWidth="2"><path d="M1 .5L14.500 14 1 27.500" /></svg></NavItem>
              <NavItem $ml={46}><svg width="27" height="27" viewBox="0 0 27 27" fill="none" stroke="currentColor" strokeWidth="2"><path d="M25.500 18A12.300 12.300 0 1 1 23.500 6" /><path d="M26.500 1v9.500H17z" fill="currentColor" stroke="none" /></svg></NavItem>
              <NavDots><span /><span /><span /></NavDots>
              <NavItem $ml={33}><GlobeIcon /></NavItem>
              <Address><b>localhost</b>:3000</Address>
              <NavProfile>
                <svg width="28" height="24" viewBox="0 0 28 24" fill="none" stroke="currentColor" strokeWidth="2"><circle cx="19" cy="6" r="5" /><path d="M8 22c0-5 3-8 8-8h6c3 0 4 3 4 9" /></svg>
              </NavProfile>
            </NavBar>
            <Bookmarks>
              {["LLMs", "HUST", "Tools", "TovChain", "Algorithms"].map((name) => (
                <Bookmark key={name}><FolderOutline />{name}</Bookmark>
              ))}
            </Bookmarks>
            <Panes>
              <Page>
                <h1>User Details</h1>
                {details.map(([label, value]) => (
                  <p key={label}><strong>{label}:</strong> {value}</p>
                ))}
                <Pager>
                  <PageButton $w={137}>Previous</PageButton>
                  <PageButton $w={87}>Next</PageButton>
                </Pager>
                <Bubbles>
                  <TranslateBubble><TranslateIcon /></TranslateBubble>
                  <BotBubble><BotFace /></BotBubble>
                </Bubbles>
              </Page>
              <DevTools>
                <DevHeader><Cross size={16} w={3} /></DevHeader>
                <DevError><Cross size={16} w={3} />hack</DevError>
                <DevToolbar><GearIcon size={24} w={3} color="#c7c7c7" /></DevToolbar>
                <DevLog />
              </DevTools>
            </Panes>
          </Frame>
        </Main>
      </Browser>

      <WindowShadow />
      <Window>
        <TitleBar>
          <svg width="24" height="22" viewBox="0 0 24 22" fill="none" stroke="#fff" strokeWidth="1.800"><path d="M24 11H1.500M11.500 .7L1.200 11l10.300 10.300" /></svg>
          <svg width="83" height="20" viewBox="-53 0 83 20" stroke="#fff" strokeWidth="2"><path d="M0 1h30M0 10h30M0 19h30" /></svg>
          <TitleText>Settings</TitleText>
          <Controls>
            <Control><svg width="20" height="20" stroke="#fff" strokeWidth="2"><path d="M0 9h20" /></svg></Control>
            <Control><svg width="20" height="20" fill="none" stroke="#fff" strokeWidth="2"><rect x="1" y="1" width="18" height="18" rx="2" /></svg></Control>
            <Control><Cross size={20} w={1.8} /></Control>
          </Controls>
        </TitleBar>
        <Crumbs>
          <span>System</span>
          <svg width="14" height="22" viewBox="0 0 14 22" fill="none" stroke="#c9c9c9" strokeWidth="2.600"><path d="M1.500 1l10 10-10 10" /></svg>
          <span>About</span>
        </Crumbs>
        <Cards>
          <PcCard>
            <div>
              <PcName>DESKTOP-RRVON5V</PcName>
              <PcModel>Surface Pro 6</PcModel>
            </div>
            <Button $w={260}>Rename this PC</Button>
          </PcCard>
          <Card>
            <CardHeader>
              <HeaderIcon>
                <svg width="38" height="38" viewBox="0 0 38 38" fill="none" stroke="#fff" strokeWidth="2.600">
                  <circle cx="19" cy="19" r="17.500" />
                  <path d="M19 16v12" />
                  <circle cx="19" cy="11.500" r="1.900" fill="#fff" stroke="none" />
                </svg>
              </HeaderIcon>
              <CardTitle>Device specifications</CardTitle>
              <Button $w={180}>Copy</Button>
              <Chevron><Caret /></Chevron>
            </CardHeader>
            <SpecList rows={deviceSpecs} />
            <Related>
              <b>Related links</b>
              <Links>
                <span>Domain or workgroup</span>
                <span>System protection</span>
                <span>Advanced system settings</span>
              </Links>
            </Related>
          </Card>
          <Card>
            <CardHeader>
              <HeaderIcon>
                <svg width="38" height="38" fill="#fff"><path d="M0 0h18v18H0zM20 0h18v18H20zM0 20h18v18H0zM20 20h18v18H20z" /></svg>
              </HeaderIcon>
              <CardTitle>Windows specifications</CardTitle>
              <Button $w={180}>Copy</Button>
              <Chevron><Caret /></Chevron>
            </CardHeader>
            <SpecList rows={windowsSpecs} />
          </Card>
        </Cards>
      </Window>

      <Taskbar>
        <Weather>
          <WeatherIcon />
          <div>
            <div>72°F</div>
            <div>Mostly cloudy</div>
          </div>
        </Weather>
        <StartLogo />
        <SearchBox>
          <Magnifier />
          <span>Search</span>
          <SchoolArt />
        </SearchBox>
        <TaskButton><OperaRed><Opera size={48} w={2} /></OperaRed></TaskButton>
        <TaskButton><ExplorerIcon /></TaskButton>
        <TaskButton><TeamsIcon /><TeamsT>T</TeamsT><Tag $bg="#2de3e6">NEW</Tag></TaskButton>
        <TaskButton><EdgeIcon /></TaskButton>
        <TaskButton $active><SettingsGear /></TaskButton>
        <TaskButton><CodeIcon /></TaskButton>
        <TaskButton><TerminalIcon /><Tag $bg="#4fe3fb" $small>PRE</Tag></TaskButton>
        <Tray>
          <TrayItem><svg width="26" height="14" viewBox="0 0 26 14" fill="none" stroke="#fff" strokeWidth="2"><path d="M1 13.500L13 1.500l12 12" /></svg></TrayItem>
          <TrayItem $ml={18}><SyncIcon /></TrayItem>
          <Lang>ENG</Lang>
          <TrayItem $ml={36}><WifiIcon /></TrayItem>
          <TrayItem $ml={15}><MutedIcon /></TrayItem>
          <TrayItem $ml={17}><BatteryIcon /></TrayItem>
          <Clock>3:27 PM<br />3/19/2024</Clock>
          <MoonIcon />
        </Tray>
      </Taskbar>
    </Desktop>
  );
}
